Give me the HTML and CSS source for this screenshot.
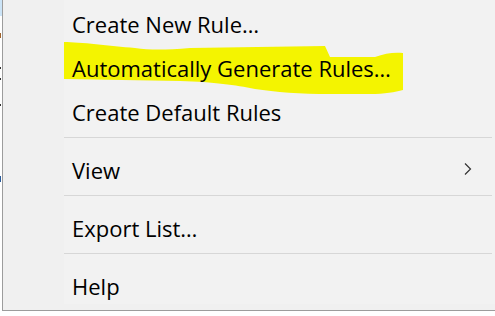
FILE: index.html
```html
<!DOCTYPE html>
<html>
<head>
    <title>Rules menu</title>
    <link rel="stylesheet" href="styles.css">
</head>
<body>
    <div class="behind"></div>
    <div class="menu">
        <div class="panel">
            <!-- yellow marker stroke drawn over the screenshot -->
            <svg class="marker" width="495" height="316" viewBox="0 0 495 316">
                <path d="M64,42 C80,42 110,46 135,48 C150,50 165,50 190,48 L325,46 L330,57 L375,57 C385,53 395,52 403,53 L403,90 C395,92 385,94 370,94 L330,94 C300,94 275,92 255,89 C235,85 215,82 180,81 L64,79 Z" fill="#f4f400"/>
            </svg>
            <div class="item">Create New Rule…</div>
            <div class="item">Automatically Generate Rules…</div>
            <div class="item">Create Default Rules</div>
            <div class="sep"></div>
            <div class="item">
                <span>View</span>
                <svg class="chevron" width="8" height="12" viewBox="0 0 8 12">
                    <polyline points="1,0.5 6.5,6 1,11.5" fill="none" stroke="#333" stroke-width="1.2"/>
                </svg>
            </div>
            <div class="sep"></div>
            <div class="item">Export List…</div>
            <div class="sep"></div>
            <div class="item">Help</div>
        </div>
    </div>
</body>
</html>
```

FILE: styles.css
```css
body {
    margin: 0;
    padding: 0;
    background: #ffffff;
    overflow: hidden;
    font-family: "Open Sans", "Noto Sans", sans-serif;
}

/* sliver of the window under the menu */
.behind {
    position: absolute;
    left: 0;
    top: 0;
    width: 2px;
    height: 316px;
    background:
        linear-gradient(#cce4f7, #cce4f7) 0 0 / 2px 16px no-repeat,
        linear-gradient(#a0622a, #a0622a) 0 33px / 1px 5px no-repeat,
        linear-gradient(#333, #333) 0 67px / 1px 2px no-repeat,
        linear-gradient(#333, #333) 0 78px / 1px 2px no-repeat,
        linear-gradient(#333, #333) 0 104px / 1px 2px no-repeat,
        linear-gradient(#2a5a9a, #2a5a9a) 0 176px / 1px 6px no-repeat,
        #ffffff;
}

.menu {
    position: relative;
    width: 492px;
    margin: -2px 0 0 2px;
    padding-bottom: 6px;
    background: #f0f0f0;
    border-left: 1px solid #9c9c9c;
    border-bottom: 1px solid #9c9c9c;
    box-shadow: 2px 2px 2px rgba(0, 0, 0, 0.35);
}

.panel {
    position: relative;
    margin-left: 61px;
    background: #f2f2f2;
}

.marker {
    position: absolute;
    left: -64px;
    top: 2px;
}

.item {
    position: relative;
    display: flex;
    align-items: center;
    height: 36px;
    padding: 8px 0 0 8px;
    font-size: 22px;
    line-height: 36px;
    color: #000000;
}

.chevron {
    margin-left: auto;
    margin-right: 23px;
    margin-top: -3px;
}

.sep {
    height: 14px;
    margin-right: 3px;
    background: linear-gradient(#d7d7d7, #d7d7d7) 0 7px / 100% 1px no-repeat;
}
```
